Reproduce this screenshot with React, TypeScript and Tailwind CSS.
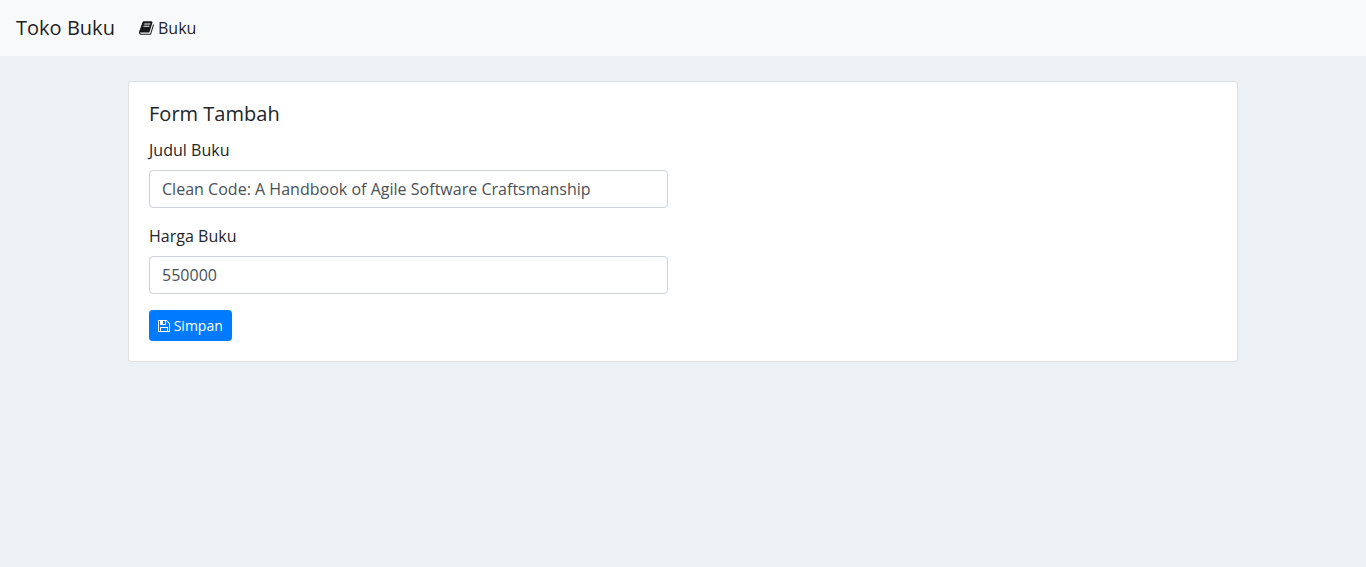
import { useState } from "react";

function BookIcon() {
  return (
    <svg
      viewBox="64 0 1664 1792"
      className="block h-4 w-[14.86px] shrink-0 fill-current"
      aria-hidden="true"
    >
      <path d="M1703 478q40 57 18 129l-275 906q-19 64-76.5 107.5t-122.5 43.5h-923q-77 0-148.5-53.5t-99.5-131.5q-24-67-2-127 0-4 3-27t4-37q1-8-3-21.5t-3-19.5q2-11 8-21t16.5-23.5 16.5-23.5q23-38 45-91.5t30-91.5q3-10 .5-30t-.5-28q3-11 17-28t17-23q21-36 42-92t25-90q1-9-2.5-32t.5-28q4-13 22-30.5t22-22.5q19-26 42.5-84.5t27.5-96.5q1-8-3-25.5t-2-26.5q2-8 9-18t18-23 17-21q8-12 16.5-30.5t15-35 16-36 19.5-32 26.5-23.5 36-11.5 47.5 5.5l-1 3q38-9 51-9h761q74 0 114 56t18 130l-274 906q-36 119-71.5 153.5t-128.5 34.5h-869q-27 0-38 15-11 16-1 43 24 70 144 70h923q29 0 56-15.5t35-41.5l300-987q7-22 5-57 38 15 59 43zm-1064 2q-4 13 2 22.5t20 9.5h608q13 0 25.5-9.5t16.5-22.5l21-64q4-13-2-22.5t-20-9.5h-608q-13 0-25.5 9.5t-16.5 22.5zm-83 256q-4 13 2 22.5t20 9.5h608q13 0 25.5-9.5t16.5-22.5l21-64q4-13-2-22.5t-20-9.5h-608q-13 0-25.5 9.5t-16.5 22.5z" />
    </svg>
  );
}

function SaveIcon() {
  return (
    <svg
      viewBox="128 0 1536 1792"
      className="block h-3.5 w-3 shrink-0 fill-current"
      aria-hidden="true"
    >
      <path d="M512 1536h768v-384h-768v384zm896 0h128v-896q0-14-10-38.5t-20-34.5l-281-281q-10-10-34-20t-39-10v416q0 40-28 68t-68 28h-576q-40 0-68-28t-28-68v-416h-128v1280h128v-416q0-40 28-68t68-28h832q40 0 68 28t28 68v416zm-384-928v-320q0-13-9.5-22.5t-22.5-9.5h-192q-13 0-22.5 9.5t-9.5 22.5v320q0 13 9.5 22.5t22.5 9.5h192q13 0 22.5-9.5t9.5-22.5zm640 32v928q0 40-28 68t-68 28h-1344q-40 0-68-28t-28-68v-1344q0-40 28-68t68-28h928q40 0 88 20t76 48l280 280q28 28 48 76t20 88z" />
    </svg>
  );
}

interface FieldProps {
  id: string;
  label: string;
  value: string;
  onChange: (value: string) => void;
}

function Field({ id, label, value, onChange }: FieldProps) {
  return (
    <div className="mb-4">
      <label htmlFor={id} className="mb-2 block">
        {label}
      </label>
      <input
        id={id}
        type="text"
        value={value}
        onChange={(event) => onChange(event.target.value)}
        className="block h-[38px] w-full rounded border border-[#ced4da] bg-white px-3 py-1.5 text-base tracking-[0.02px] text-[#495057] outline-none focus:border-[#80bdff]"
      />
    </div>
  );
}

export default function App() {
  const [title, setTitle] = useState("Clean Code: A Handbook of Agile Software Craftsmanship");
  const [price, setPrice] = useState("550000");

  return (
    <div className="min-h-screen bg-[#ecf1f6] font-['Open_Sans',sans-serif] text-base tracking-[0.02px] text-[#212529]">
      <nav className="flex h-14 items-center bg-[#f8f9fa] px-4 text-black/90">
        <a href="#" className="mr-4 text-xl leading-[30px]">
          Toko Buku
        </a>
        <a href="#" className="flex items-center gap-[4.16px] px-2">
          <BookIcon />
          <span>Buku</span>
        </a>
      </nav>
      <main className="mx-auto mt-[25px] w-[1110px]">
        <section className="rounded border border-black/12.5 bg-white bg-clip-border p-5">
          <h5 className="mb-3 text-xl leading-6 font-normal">Form Tambah</h5>
          <form className="w-[519px]" onSubmit={(event) => event.preventDefault()}>
            <Field id="judul" label="Judul Buku" value={title} onChange={setTitle} />
            <Field id="harga" label="Harga Buku" value={price} onChange={setPrice} />
            <button
              type="submit"
              className="flex h-[31px] items-center gap-[3.64px] rounded-[3.2px] border border-[#007bff] bg-[#007bff] px-2 text-sm leading-[21px] text-white"
            >
              <SaveIcon />
              <span>Simpan</span>
            </button>
          </form>
        </section>
      </main>
    </div>
  );
}
